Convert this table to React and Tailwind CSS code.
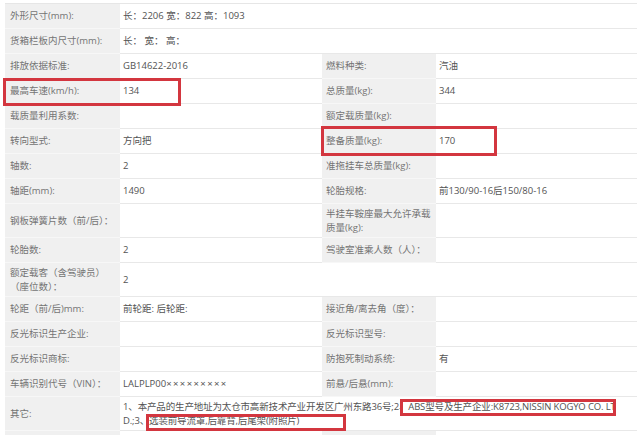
import React from 'react';

const rows = [
  { h: 'h-[25px]', cells: [['外形尺寸(mm):', 'label'], ['长：2206 宽：822 高：1093', 'value', 'col-span-3']] },
  { h: 'h-[25px]', cells: [['货箱栏板内尺寸(mm):', 'label'], ['长： 宽： 高：', 'value', 'col-span-3']] },
  { h: 'h-[25px]', cells: [['排放依据标准:', 'label'], ['GB14622-2016', 'value'], ['燃料种类:', 'label'], ['汽油', 'value']] },
  { h: 'h-[25px]', cells: [['最高车速(km/h):', 'label'], ['134', 'value'], ['总质量(kg):', 'label'], ['344', 'value']] },
  { h: 'h-[25px]', cells: [['载质量利用系数:', 'label'], ['', 'value'], ['额定载质量(kg):', 'label'], ['', 'value']] },
  { h: 'h-[25px]', cells: [['转向型式:', 'label'], ['方向把', 'value'], ['整备质量(kg):', 'label'], ['170', 'value']] },
  { h: 'h-[25px]', cells: [['轴数:', 'label'], ['2', 'value'], ['准拖挂车总质量(kg):', 'label'], ['', 'value']] },
  { h: 'h-[25px]', cells: [['轴距(mm):', 'label'], ['1490', 'value'], ['轮胎规格:', 'label'], ['前130/90-16后150/80-16', 'value']] },
  { h: 'h-[34px]', cells: [['钢板弹簧片数（前/后）：', 'label'], ['', 'value'], [['半挂车鞍座最大允许承载', '质量(kg):'], 'label'], ['', 'value']] },
  { h: 'h-[25px]', cells: [['轮胎数:', 'label'], ['2', 'value'], ['驾驶室准乘人数（人）：', 'label'], ['', 'value']] },
  { h: 'h-[34px]', cells: [[['额定载客（含驾驶员）', '（座位数）：'], 'label'], ['2', 'value'], ['', 'value', 'col-span-2']] },
  { h: 'h-[25px]', cells: [['轮距（前/后)mm:', 'label'], ['前轮距: 后轮距:', 'value'], ['接近角/离去角（度）：', 'label'], ['', 'value']] },
  { h: 'h-[25px]', cells: [['反光标识生产企业:', 'label'], ['', 'value'], ['反光标识型号:', 'label'], ['', 'value']] },
  { h: 'h-[25px]', cells: [['反光标识商标:', 'label'], ['', 'value'], ['防抱死制动系统:', 'label'], ['有', 'value']] },
  {
    h: 'h-[25px]',
    cells: [
      ['车辆识别代号（VIN）：', 'label'],
      [
        <>
          LALPLP00<span className="tracking-[1.4px]">×××××××××</span>
        </>,
        'value',
      ],
      ['前悬/后悬(mm):', 'label'],
      ['', 'value'],
    ],
  },
  {
    h: 'h-[34px]',
    cells: [
      ['其它:', 'label'],
      [
        [
          '1、本产品的生产地址为太仓市高新技术产业开发区广州东路36号;2、ABS型号及生产企业:K8723,NISSIN KOGYO CO. LT',
          'D.;3、选装前导流罩,后靠背,后尾架(附照片)',
        ],
        'value',
        'col-span-3 tracking-[-0.15px]',
      ],
    ],
  },
  { h: 'h-[25px]', cells: [['', 'label'], ['', 'value'], ['', 'label'], ['', 'value']] },
];

function Cell({ text, kind, span, first }) {
  const lines = Array.isArray(text) ? text : [text];
  const base =
    kind === 'label'
      ? `bg-[#f0f0f0] text-[#747474] border-b border-[#f7f7f7] ${first ? 'pl-[5px]' : 'pl-[4px]'}`
      : 'bg-white text-[#535353] border-b border-[#e8e8e8] pl-[3px]';
  return (
    <div className={`flex flex-col justify-center whitespace-nowrap leading-[14px] ${base} ${span || ''}`}>
      {lines.map((l, i) => (
        <span key={i}>{l}</span>
      ))}
    </div>
  );
}

export default function App() {
  return (
    <div
      className="relative w-[641px] h-[435px] overflow-hidden bg-white text-[9.5px]"
      style={{ fontFamily: '"Open Sans", "Noto Sans CJK SC", sans-serif' }}
    >
      <div className="ml-[5px] mt-[3px] w-[632px] border-t border-r border-[#e6e6e6]">
        {rows.map((r, i) => (
          <div key={i} className={`grid grid-cols-[115px_202px_114px_201px] ${r.h}`}>
            {r.cells.map(([t, k, s], j) => (
              <Cell key={j} text={t} kind={k} span={s} first={j === 0} />
            ))}
          </div>
        ))}
      </div>

      {/* annotation boxes */}
      <div className="absolute left-[3px] top-[78px] w-[178px] h-[28px] border-[3px] border-[#d3363f]" />
      <div className="absolute left-[321px] top-[126px] w-[176px] h-[30px] border-[3px] border-[#d3363f]" />
      <div className="absolute left-[400px] top-[399px] w-[216px] h-[17px] border-[3px] border-[#d3363f]" />
      <div className="absolute left-[146px] top-[414px] w-[200px] h-[17px] border-[3px] border-[#d3363f]" />
    </div>
  );
}
